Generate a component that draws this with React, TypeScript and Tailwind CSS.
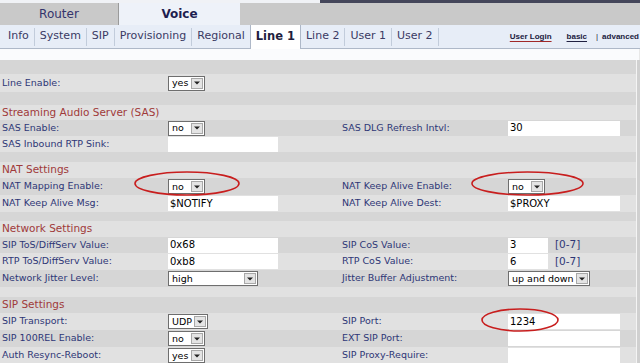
import React from "react";

const FONT = "font-['DejaVu_Sans',Verdana,sans-serif]";

function Arrow() {
  return (
    <div className="w-[12px] h-[11px] mr-[1px] bg-[#e4e4e4] border border-[#a8a8a8] flex items-center justify-center shrink-0">
      <svg width="6" height="4" viewBox="0 0 6 4">
        <path d="M0 0.5 L6 0.5 L3 3.5 Z" fill="#222" />
      </svg>
    </div>
  );
}

function Sel({ value, w }: { value: string; w: string }) {
  return (
    <div className={`flex items-center justify-between h-[15px] bg-white border border-[#6e6e6e] overflow-hidden ${w}`}>
      <span className="pl-[3px] text-[9.5px] leading-none text-black whitespace-nowrap">{value}</span>
      <Arrow />
    </div>
  );
}

function Inp({ value, w }: { value: string; w: string }) {
  return (
    <div className={`flex items-center h-[15px] bg-white ${w}`}>
      <span className="pl-[2px] text-[10px] leading-none text-black">{value}</span>
    </div>
  );
}

type Cell = React.ReactNode;

type Row =
  | { kind: "empty"; h: string }
  | { kind: "header"; h: string; text: string }
  | { kind: "field"; h: string; l: string; lv: Cell; r?: string; rv?: Cell };

const rows: Row[] = [
  { kind: "empty", h: "h-[14px]" },
  { kind: "field", h: "h-[18px]", l: "Line Enable:", lv: <Sel value="yes" w="w-[37px]" /> },
  { kind: "empty", h: "h-[13px]" },
  { kind: "header", h: "h-[15px]", text: "Streaming Audio Server (SAS)" },
  {
    kind: "field",
    h: "h-[16px]",
    l: "SAS Enable:",
    lv: <Sel value="no" w="w-[37px]" />,
    r: "SAS DLG Refresh Intvl:",
    rv: <Inp value="30" w="w-[112px]" />,
  },
  { kind: "field", h: "h-[16px]", l: "SAS Inbound RTP Sink:", lv: <Inp value="" w="w-[110px]" /> },
  { kind: "empty", h: "h-[10px]" },
  { kind: "header", h: "h-[16px]", text: "NAT Settings" },
  {
    kind: "field",
    h: "h-[17px]",
    l: "NAT Mapping Enable:",
    lv: <Sel value="no" w="w-[37px]" />,
    r: "NAT Keep Alive Enable:",
    rv: <Sel value="no" w="w-[37px]" />,
  },
  {
    kind: "field",
    h: "h-[17px]",
    l: "NAT Keep Alive Msg:",
    lv: <Inp value="$NOTIFY" w="w-[110px]" />,
    r: "NAT Keep Alive Dest:",
    rv: <Inp value="$PROXY" w="w-[112px]" />,
  },
  { kind: "empty", h: "h-[9px]" },
  { kind: "header", h: "h-[16px]", text: "Network Settings" },
  {
    kind: "field",
    h: "h-[16px]",
    l: "SIP ToS/DiffServ Value:",
    lv: <Inp value="0x68" w="w-[110px]" />,
    r: "SIP CoS Value:",
    rv: (
      <div className="flex items-center">
        <Inp value="3" w="w-[40px]" />
        <span className="ml-[7px] text-[10.5px] text-[#2e3676]">[0-7]</span>
      </div>
    ),
  },
  {
    kind: "field",
    h: "h-[17px]",
    l: "RTP ToS/DiffServ Value:",
    lv: <Inp value="0xb8" w="w-[110px]" />,
    r: "RTP CoS Value:",
    rv: (
      <div className="flex items-center">
        <Inp value="6" w="w-[40px]" />
        <span className="ml-[7px] text-[10.5px] text-[#2e3676]">[0-7]</span>
      </div>
    ),
  },
  {
    kind: "field",
    h: "h-[17px]",
    l: "Network Jitter Level:",
    lv: <Sel value="high" w="w-[90px]" />,
    r: "Jitter Buffer Adjustment:",
    rv: <Sel value="up and down" w="w-[82px]" />,
  },
  { kind: "empty", h: "h-[10px]" },
  { kind: "header", h: "h-[16px]", text: "SIP Settings" },
  {
    kind: "field",
    h: "h-[17px]",
    l: "SIP Transport:",
    lv: <Sel value="UDP" w="w-[40px]" />,
    r: "SIP Port:",
    rv: <Inp value="1234" w="w-[112px]" />,
  },
  {
    kind: "field",
    h: "h-[17px]",
    l: "SIP 100REL Enable:",
    lv: <Sel value="no" w="w-[37px]" />,
    r: "EXT SIP Port:",
    rv: <Inp value="" w="w-[112px]" />,
  },
  {
    kind: "field",
    h: "h-[17px]",
    l: "Auth Resync-Reboot:",
    lv: <Sel value="yes" w="w-[37px]" />,
    r: "SIP Proxy-Require:",
    rv: <Inp value="" w="w-[112px]" />,
  },
];

const subTabs = ["Info", "System", "SIP", "Provisioning", "Regional"];
const subTabs2 = ["Line 2", "User 1", "User 2"];

export default function App() {
  return (
    <div className={`relative w-[640px] h-[363px] overflow-hidden bg-[#dcdcdc] ${FONT}`}>
      {/* top thin line */}
      <div className="flex h-[3px]">
        <div className="w-[320px] bg-[#f0f2f6]" />
        <div className="flex-1 bg-[#44465a]" />
      </div>
      {/* main tabs */}
      <div className="flex h-[22px]">
        <div className="w-[119px] bg-[#c9c9c9] border-r border-[#9a9a9a] flex items-center justify-center text-[12px] text-[#34346c]">
          Router
        </div>
        <div className="w-[121px] bg-[#eef2f9] flex items-center justify-center text-[12px] font-bold text-[#1e1e50]">
          Voice
        </div>
        <div className="flex-1 bg-[#c9c9c9]" />
      </div>
      {/* sub tabs */}
      <div className="flex h-[24px] bg-[#e7edf7] border-b border-[#aeb8c8] items-stretch">
        <div className="flex items-center pl-[3px]">
          {subTabs.map((t, i) => (
            <div key={t} className="flex items-center h-full">
              {i > 0 && <div className="w-px h-[18px] bg-[#c2ccdb]" />}
              <span className="px-[5px] text-[11px] text-[#3a3a64]">{t}</span>
            </div>
          ))}
        </div>
        <div className="relative -mb-px flex items-center px-[5px] bg-white border-l border-r border-[#aeb8c8] text-[11.5px] font-bold text-[#1e1e40]">
          Line 1
        </div>
        <div className="flex items-center">
          {subTabs2.map((t) => (
            <div key={t} className="flex items-center h-full">
              <span className="px-[5px] text-[11px] text-[#3a3a64]">{t}</span>
              <div className="w-px h-[18px] bg-[#c2ccdb]" />
            </div>
          ))}
        </div>
        <div className="flex-1" />
        <div className="flex items-center pr-[1px] font-['Liberation_Sans',Arial,sans-serif] text-[8px] font-bold text-[#202040] leading-none whitespace-nowrap">
          <span className="underline decoration-[#a02828] underline-offset-2">User Login</span>
          <span className="ml-[15px] underline underline-offset-2">basic</span>
          <span className="ml-[9px] font-normal">|</span>
          <span className="ml-[4px]">advanced</span>
        </div>
      </div>
      {/* white strip */}
      <div className="h-[11px] bg-[#fafbfd] border-r border-[#e8e8e8]" />
      {/* form */}
      <div className="flex">
        <div className="w-[637px] border-r border-[#f4f4f4]">
          {rows.map((row, i) => {
            const bg = i % 2 === 0 ? "bg-[#d6d6d6]" : "bg-[#e1e1e1]";
            if (row.kind === "empty") return <div key={i} className={`${row.h} ${bg}`} />;
            if (row.kind === "header")
              return (
                <div key={i} className={`${row.h} ${bg} flex items-center pl-[2px] text-[10.5px] text-[#a03a3a]`}>
                  {row.text}
                </div>
              );
            return (
              <div key={i} className={`${row.h} ${bg} flex items-center text-[9.5px] text-[#2e3676]`}>
                <div className="w-[168px] pl-[2px]">{row.l}</div>
                <div className="w-[174px]">{row.lv}</div>
                <div className="w-[166px]">{row.r}</div>
                <div className="flex-1">{row.rv}</div>
              </div>
            );
          })}
        </div>
        <div className="flex-1 bg-[#d0d0d0]" />
      </div>
      {/* red ellipses */}
      <svg className="absolute left-0 top-0 pointer-events-none" width="640" height="363">
        <ellipse cx="187" cy="183.5" rx="52" ry="11.5" fill="none" stroke="#c81e1e" strokeWidth="1.6" />
        <ellipse cx="527.5" cy="183.5" rx="55.5" ry="11.5" fill="none" stroke="#c81e1e" strokeWidth="1.6" />
        <ellipse cx="520" cy="320" rx="38" ry="11" fill="none" stroke="#c81e1e" strokeWidth="1.6" />
      </svg>
    </div>
  );
}
